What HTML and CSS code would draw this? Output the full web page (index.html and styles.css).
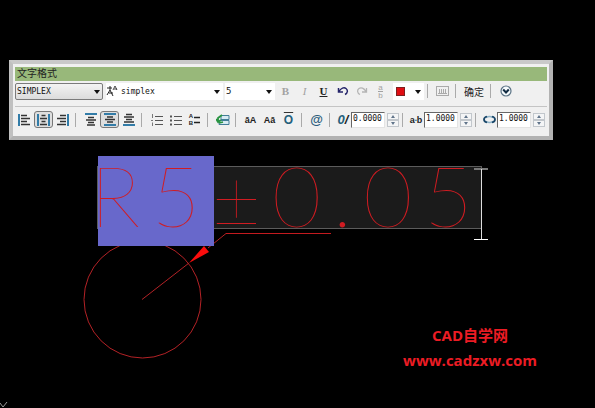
FILE: index.html
```html
<!DOCTYPE html>
<html lang="zh-CN">
<head>
<meta charset="utf-8">
<title>文字格式</title>
<link rel="stylesheet" href="styles.css">
</head>
<body>
<main class="workspace">
  <svg class="drawing" width="595" height="408" fill="none" stroke="#b32226" aria-hidden="true">
    <circle cx="142.500" cy="299.500" r="58.500"/>
    <path d="M142 299.500L189 263M208 248L226 233.500"/>
    <path d="M226 233.500H331" stroke="#c41a1f"/>
    <path d="M189 263L204 246L209 252Z" fill="#fb0d0d" stroke="none"/>
    <path d="M0 403l3 4 4-5" stroke="#999"/>
  </svg>

  <section class="mtext" aria-label="R5±0.05">
    <div class="selection"></div>
    <p class="mtext-line"><span>R</span><span>5</span><span>±</span><span>0</span><span>.</span><span>0</span><span>5</span></p>
    <svg class="caret" width="14" height="74" fill="none" aria-hidden="true">
      <path d="M0 2h14" stroke="#777" stroke-width="2"/><path d="M7.500 2v70" stroke="#ddd"/><path d="M0 72.500h14" stroke="#fff"/>
    </svg>
  </section>

  <section class="panel" aria-label="文字格式">
    <h1 class="title">文字格式</h1>
    <div class="row row-top">
      <span class="combo combo-style"><select aria-label="样式"><option>SIMPLEX</option></select></span>
      <span class="combo combo-font">
        <svg width="12" height="12" viewBox="0 0 12 12" fill="none" stroke="#222"><path d="M1 10l3-5 3 6M3 8h4M1 3h5M4 1v4"/><path d="M7 5l2-4 2 4M8 4h3" stroke-width=".8"/></svg>
        <select aria-label="字体"><option>simplex</option></select></span>
      <span class="combo combo-size"><select aria-label="字高"><option>5</option></select></span>
      <div class="group group-edit">
        <button class="tool letter dim" aria-label="粗体"><b>B</b></button>
        <button class="tool letter dim" aria-label="斜体"><i>I</i></button>
        <button class="tool letter" aria-label="下划线"><u>U</u></button>
        <button class="tool" aria-label="放弃"><svg width="12" height="10" viewBox="0 0 12 10" fill="none" stroke="#24246a" stroke-width="1.500"><path d="M1.500 2v4H6M2 5.500C4 2 7 1 9 2.500s2 4.500-1 6"/></svg></button>
        <button class="tool" aria-label="重做"><svg width="12" height="10" viewBox="0 0 12 10" fill="none" stroke="#b4b4b4" stroke-width="1.300"><path d="M10.500 2v4H6M10 5.500C8 2 5 1 3 2.500s-2 4.500 1 6"/></svg></button>
        <button class="tool fraction dim" aria-label="堆叠"><span>a</span><span>b</span></button>
      </div>
      <span class="combo combo-color"><i class="swatch"></i><select aria-label="颜色"><option></option></select></span>
      <hr class="sep">
      <button class="tool" aria-label="标尺"><svg width="13" height="12" viewBox="0 0 13 12" fill="none" stroke="#aaa"><rect x=".5" y="1.500" width="12" height="9"/><path d="M3.500 4v4M5.500 4v4M7.500 4v4M9.500 4v4M2 8.500h9"/></svg></button>
      <hr class="sep">
      <button class="ok">确定</button>
      <hr class="sep">
      <button class="tool" aria-label="选项"><svg width="12" height="12" viewBox="0 0 12 12" fill="none"><circle cx="6" cy="6" r="5" fill="#f5fafc" stroke="#5b7385" stroke-width="1.200"/><path d="M3.200 4.500L6 7.500l2.800-3" stroke="#112b42" stroke-width="2"/></svg></button>
    </div>
    <div class="row row-bottom">
      <button class="tool" aria-label="左对齐"><svg width="13" height="12" viewBox="0 0 13 12"><path d="M1 0v12" stroke="#327ca8" stroke-width="2"/><path d="M3 1.500h6M3 4.500h9M3 7.500h6M3 10.500h9" stroke="#333" stroke-width="1.500"/></svg></button>
      <button class="tool pressed" aria-label="居中"><svg width="13" height="12" viewBox="0 0 13 12"><path d="M1 0v12M12 0v12" stroke="#327ca8" stroke-width="2"/><path d="M4.500 1.500h4M3 4.500h7M4.500 7.500h4M3 10.500h7" stroke="#333" stroke-width="1.500"/></svg></button>
      <button class="tool" aria-label="右对齐"><svg width="13" height="12" viewBox="0 0 13 12"><path d="M12 0v12" stroke="#327ca8" stroke-width="2"/><path d="M4 1.500h6M1 4.500h9M4 7.500h6M1 10.500h9" stroke="#333" stroke-width="1.500"/></svg></button>
      <hr class="sep">
      <button class="tool" aria-label="上"><svg width="12" height="13" viewBox="0 0 12 13"><path d="M0 1h12" stroke="#327ca8" stroke-width="2"/><path d="M3 4.500h6M1 7h10M3 9.500h6M2 12h8" stroke="#333" stroke-width="1.300"/></svg></button>
      <button class="tool pressed" aria-label="中央"><svg width="12" height="13" viewBox="0 0 12 13"><path d="M0 1h12M0 12h12" stroke="#327ca8" stroke-width="2"/><path d="M3 4h6M1 6.500h10M3 9h6" stroke="#333" stroke-width="1.400"/></svg></button>
      <button class="tool" aria-label="下"><svg width="12" height="13" viewBox="0 0 12 13"><path d="M0 12h12" stroke="#327ca8" stroke-width="2"/><path d="M3 1.500h6M1 4h10M3 6.500h6M1 9h10" stroke="#333" stroke-width="1.300"/></svg></button>
      <hr class="sep">
      <button class="tool" aria-label="编号"><svg width="12" height="12" viewBox="0 0 12 12" stroke="#555"><path d="M4 2.500h8M4 6.500h8M4 10.500h8"/><path d="M1.500 0v4M0 6.500h2M1.500 8.500v3.500" stroke="#777"/></svg></button>
      <button class="tool" aria-label="项目符号"><svg width="12" height="12" viewBox="0 0 12 12" stroke="#555"><path d="M4 2.500h8M4 6.500h8M4 10.500h8"/><path d="M0 2.500h2M0 6.500h2M0 10.500h2" stroke-width="2"/></svg></button>
      <button class="tool lettered" aria-label="大写字母"><span>A<br>B</span><svg width="7" height="12" viewBox="0 0 7 12" stroke="#222" stroke-width="1.700"><path d="M1 3.500h6M1 8.500h6"/></svg></button>
      <hr class="sep">
      <button class="tool" aria-label="插入字段"><svg width="14" height="12" viewBox="0 0 14 12" fill="none"><path d="M5 1.500h8v4H5zM3 6.500h10v4H3z" fill="#d7ebf3" stroke="#427d98"/><path d="M6 1L2 4v3M0 5l2 3 3-2M3 9l4-1" stroke="#299442" stroke-width="1.800"/></svg></button>
      <hr class="sep">
      <button class="tool case" aria-label="全部大写">ā<span>A</span></button>
      <button class="tool case" aria-label="小写">A<span>ā</span></button>
      <button class="tool over" aria-label="上划线">O</button>
      <hr class="sep">
      <button class="tool at" aria-label="符号">@</button>
      <hr class="sep">
      <label class="field"><span class="field-icon oblique"><em>0</em>/</span><input value="0.0000" aria-label="倾斜角度"></label>
      <span class="spin"><button aria-label="增加"></button><button aria-label="减少"></button></span>
      <hr class="sep">
      <label class="field"><span class="field-icon track">a<b>•</b>b</span><input value="1.0000" aria-label="追踪"></label>
      <span class="spin"><button aria-label="增加"></button><button aria-label="减少"></button></span>
      <hr class="sep">
      <label class="field"><span class="field-icon"><svg width="13" height="9" viewBox="0 0 13 9" fill="none"><path d="M3 2.500Q6.500 .5 10 2.500M3 6.500Q6.500 8.500 10 6.500" stroke="#8db2c8" stroke-width="1.600"/><path d="M4 1.500C0 2.500 0 6.500 4 7.500M9 1.500c4 1 4 5 0 6" stroke="#194668" stroke-width="1.800"/></svg></span><input value="1.0000" aria-label="宽度因子"></label>
      <span class="spin"><button aria-label="增加"></button><button aria-label="减少"></button></span>
    </div>
  </section>

  <footer class="credit">
    <p>CAD自学网</p>
    <p><a href="#">www.cadzxw.com</a></p>
  </footer>
</main>
</body>
</html>
```
FILE: styles.css
```css
* { box-sizing: border-box; }
body { margin: 0; background: #000; }
.workspace {
  position: relative;
  min-height: 100vh;
  padding: 60px 42px 0 9px;
  overflow: hidden;
  font-family: "Liberation Sans", "Noto Sans CJK SC", sans-serif;
}
button { border: 0; padding: 0; background: none; color: #222; font-family: inherit; }
svg { display: block; flex: none; }

/* Drawing area */
.drawing { position: absolute; left: 0; top: 0; }
.mtext {
  position: absolute;
  left: 97px;
  top: 166px;
  width: 385px;
  height: 63px;
  background: #1b1b1b;
  border: 1px solid #5c5c5c;
}
.selection {
  position: absolute;
  left: 0;
  top: -11px;
  width: 116px;
  height: 90px;
  background: #6868cb;
}
.mtext-line {
  position: relative;
  display: flex;
  justify-content: space-between;
  margin: 0 8px 0 -8px;
  font-family: Lato, Roboto, sans-serif;
  font-size: 85px;
  font-weight: 100;
  line-height: 54px;
  color: #d01c22;
}
.caret { position: absolute; right: -7px; top: 0; }

/* Text formatting panel */
.panel {
  position: relative;
  padding: 3px 2px 5px;
  border: 4px solid #b2b2b2;
  border-top-color: #c9c9c9;
  border-left-color: #c0c0c0;
  background: #f0f0f0;
}
.title {
  margin: 0;
  padding-left: 2px;
  background: #98b87a;
  font-size: 10px;
  font-weight: 400;
  line-height: 14px;
  color: #222;
}
.row { display: flex; align-items: center; }
.row-top { height: 26px; padding-bottom: 5px; border-bottom: 1px solid #c4c4c4; }
.row-bottom { height: 24px; padding-top: 1px; }
.group { display: flex; }
.combo {
  position: relative;
  display: flex;
  align-items: center;
  flex: none;
  height: 17px;
  background: #fff;
}
.combo::after {
  content: "";
  position: absolute;
  right: 3px;
  top: 7px;
  border: 3px solid transparent;
  border-top: 4px solid #111;
  border-bottom: 0;
  pointer-events: none;
}
.combo select {
  appearance: none;
  flex: 1;
  min-width: 0;
  height: 100%;
  padding: 0 0 0 3px;
  border: 0;
  background: none;
  color: #111;
  font: 8px "DejaVu Sans Mono", monospace;
}
.combo-style {
  width: 88px;
  margin-right: 3px;
  border: 1px solid #7b7b7b;
  border-radius: 2px;
  background: linear-gradient(#f3f3f3, #dcdcdc);
}
.combo-style select { padding-left: 1px; }
.combo-style::after { right: 2px; top: 6px; }
.combo-font { width: 117px; margin-right: 2px; }
.combo-size { width: 50px; margin-right: 1px; }
.combo-size select { padding-left: 1px; font-size: 9px; }
.combo-color { width: 31px; margin-left: 3px; }
.swatch { width: 9px; height: 9px; margin-left: 3px; border: 1px solid #7d2020; background: #e00d12; }
.sep { flex: none; width: 1px; height: 14px; margin: 0 5px 0 3px; border: 0; background: #aaa; }
.tool {
  display: flex;
  align-items: center;
  justify-content: center;
  flex: none;
  width: 19px;
  height: 17px;
}
.pressed { border: 1px solid #777; border-radius: 3px; background: #dedede; }
.letter { font: 11px "Liberation Serif", serif; }
.letter u { font-weight: 700; }
.tool.dim { color: #a2a2a2; }
.fraction { flex-direction: column; font-size: 8px; line-height: 7px; }
.fraction span + span { border-top: 1px solid #a2a2a2; }
.ok { width: 26px; height: 17px; font-size: 10px; }
.lettered { font-size: 6px; font-weight: 700; line-height: 7px; }
.case { font-size: 9px; font-weight: 700; }
.over { font-size: 12px; font-weight: 700; color: #24607c; text-decoration: overline #333; }
.at { font-size: 13px; font-weight: 700; color: #2b5d7c; }
.field { display: flex; align-items: center; flex: none; }
.field-icon { display: flex; align-items: center; justify-content: center; width: 16px; color: #222; font-weight: 700; }
.oblique { font-size: 13px; font-style: italic; }
.oblique em { color: #24607c; }
.track { font-size: 9px; }
.track b { color: #2d78a0; font-size: 6px; }
.field input {
  width: 34px;
  height: 16px;
  padding: 0 0 2px 1px;
  border: 1px solid #e4e4e4;
  border-top-color: #666;
  border-left-color: #666;
  background: #fff;
  color: #111;
  font: 8px "DejaVu Sans Mono", monospace;
}
.spin { display: flex; flex-direction: column; flex: none; width: 12px; margin-left: 2px; }
.spin button {
  display: flex;
  align-items: center;
  justify-content: center;
  height: 7px;
  border: 1px solid #c2c7cc;
  background: #f4f5f6;
}
.spin button::before { content: ""; border: 2px solid transparent; border-bottom: 3px solid #60748a; border-top: 0; }
.spin button + button::before { border-top: 3px solid #60748a; border-bottom: 0; }

/* Site credit */
.credit {
  position: absolute;
  right: 58px;
  bottom: 35px;
  color: #ec1c24;
  font: 700 15px/25px "Open Sans", "Noto Sans CJK SC", sans-serif;
  text-align: center;
}
.credit p { margin: 0; }
.credit a { color: inherit; text-decoration: none; }
```
